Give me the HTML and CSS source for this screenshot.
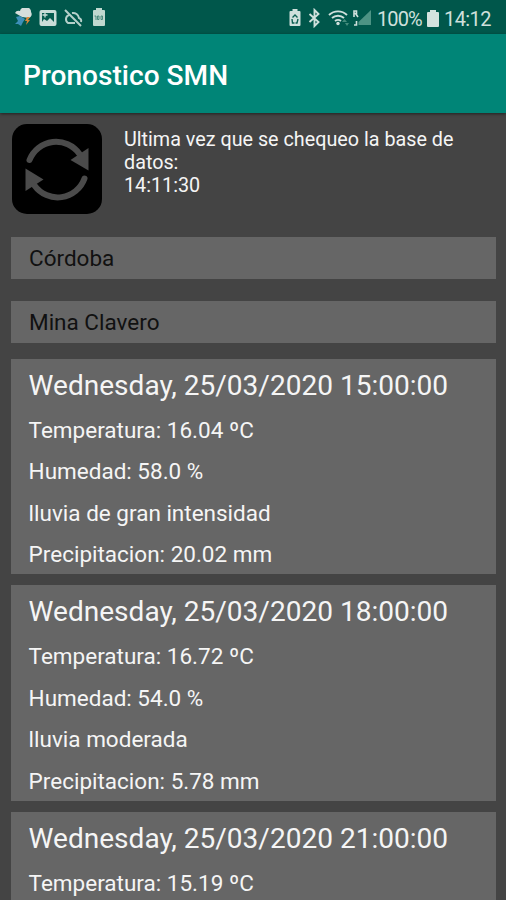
FILE: index.html
```
<!DOCTYPE html>
<html lang="es">
<head>
    <meta charset="UTF-8">
    <meta name="viewport" content="width=device-width, initial-scale=1.0">
    <title>Pronostico SMN</title>
    <link rel="stylesheet" href="styles.css">
</head>
<body>
    <div class="status-bar">
        <!-- Notifications -->
        <svg class="notifications" width="94" height="20" viewBox="0 0 94 20">
            <path d="M1 5a4 4 0 0 1 5-2 5 4 0 0 1 11 1 4 4 0 0 1-2 6l-7-1z" fill="#d5dedb"/>
            <path d="M2 9l4-1 5 3-2 3-2 4-3-2-3 0 3-3z" fill="#3d8fb8"/>
            <path d="M13 9h3l-2 3h2l-4 5 1-4h-2z" fill="#d8873b"/>
            <rect x="25.500" y="2" width="17" height="16" rx="2" fill="#c9ddd8"/>
            <path d="M28 5h12v9l-4-4-3 3-3-2-2 3z" fill="#065c4f"/>
            <path d="M31 4.500v5M28.500 7h5" stroke="#c9ddd8" stroke-width="1.300"/>
            <path d="M55 7a4.500 4.500 0 0 0-1 8h7M58 5a6 6 0 0 1 7 5 3 3 0 0 1 2 4M51 2l16 16" fill="none" stroke="#b5d0ca" stroke-width="2"/>
            <path d="M82 0h6v2h2a1 1 0 0 1 1 1v14a1 1 0 0 1-1 1H80a1 1 0 0 1-1-1V3a1 1 0 0 1 1-1h2z" fill="#bfd8cf"/>
            <path d="M80.500 8h1.500v4m1.500-4h1.500v3.500h-1.500zm3.500 0h1.500v3.500h-1.500z" fill="none" stroke="#31796b" stroke-width=".8"/>
        </svg>
        <!-- System icons -->
        <svg class="system" width="84" height="20" viewBox="0 0 84 20">
            <path d="M3.500 1h5v2h2a1 1 0 0 1 1 1v13a1 1 0 0 1-1 1h-9a1 1 0 0 1-1-1V4a1 1 0 0 1 1-1h2z" fill="#cfe0dc"/>
            <path d="M3.500 9.500L6 7l2.500 2.500M9 11l-1 4H6.500M3 11l.5 4h2" fill="none" stroke="#0b5e51" stroke-width="1.400"/>
            <path d="M20.500 6l9 8-4 4V2l4 4-9 8" fill="none" stroke="#cfe0dc" stroke-width="1.900"/>
            <g fill="none" stroke="#cfe0dc" stroke-width="1.900">
                <path d="M40 7a13 13 0 0 1 18 0M43 10a9 9 0 0 1 12 0M46 13a5 5 0 0 1 6 0"/>
            </g>
            <circle cx="49" cy="15.500" r="1.700" fill="#cfe0dc"/>
            <path d="M53 14l2.500-3 2.500 3zM56 15h4l-2 3z" fill="#458d7d"/>
            <path d="M65 9V3h2.500v2.500H65m1.500 0L69 9M67.500 13v4H65" fill="none" stroke="#cfe0dc" stroke-width="1.600"/>
            <path d="M82 2v15H69.500v-3z" fill="#4d9384"/>
        </svg>
        <span class="percent">100%</span>
        <svg class="battery" width="12" height="19" viewBox="0 0 12 19">
            <path d="M3 1h6v2h2a1 1 0 0 1 1 1v13a1 1 0 0 1-1 1H1a1 1 0 0 1-1-1V4a1 1 0 0 1 1-1h2z" fill="#d3e3df"/>
        </svg>
        <span class="clock">14:12</span>
    </div>

    <div class="toolbar">
        <h1>Pronostico SMN</h1>
    </div>

    <div class="update">
        <button class="refresh" aria-label="Actualizar">
            <svg width="90" height="90" viewBox="0 0 90 90">
                <rect width="90" height="90" rx="15" fill="#000"/>
                <g fill="none" stroke="#4b4b4b" stroke-width="6" stroke-linecap="round">
                    <path d="M17.500 36a28.500 28.500 0 0 1 50-6"/>
                    <path d="M72.500 54.500a28.500 28.500 0 0 1-50 7"/>
                </g>
                <path d="M76.500 24v22.500L58.500 36z" fill="#4b4b4b"/>
                <path d="M13.500 44.500V67L31.500 55.500z" fill="#4b4b4b"/>
            </svg>
        </button>
        <p>Ultima vez que se chequeo la base de<br>datos:<br>14:11:30</p>
    </div>

    <div class="spinner">Córdoba</div>
    <div class="spinner">Mina Clavero</div>

    <div class="forecast">
        <div class="card">
            <h2>Wednesday, 25/03/2020 15:00:00</h2>
            <p>Temperatura: 16.04 ºC</p>
            <p>Humedad: 58.0 %</p>
            <p>lluvia de gran intensidad</p>
            <p>Precipitacion: 20.02 mm</p>
        </div>
        <div class="card">
            <h2>Wednesday, 25/03/2020 18:00:00</h2>
            <p>Temperatura: 16.72 ºC</p>
            <p>Humedad: 54.0 %</p>
            <p>lluvia moderada</p>
            <p>Precipitacion: 5.78 mm</p>
        </div>
        <div class="card">
            <h2>Wednesday, 25/03/2020 21:00:00</h2>
            <p>Temperatura: 15.19 ºC</p>
        </div>
    </div>
</body>
</html>
```
FILE: styles.css
```
body {
    font-family: Roboto, "Liberation Sans", sans-serif;
    background-color: #444;
    color: #f5f5f5;
    margin: 0;
    height: 900px;
    overflow: hidden;
}

h1, h2, p {
    margin: 0;
}

.status-bar {
    display: flex;
    align-items: center;
    box-sizing: border-box;
    height: 34px;
    padding: 2px 15px 0 14px;
    background-color: #00574b;
    color: #cfe0dc;
    font-size: 20px;
    white-space: nowrap;
}

.system {
    margin-left: auto;
}

.percent {
    width: 45px;
    margin: 0 5px 0 4px;
    letter-spacing: -0.9px;
}

.clock {
    width: 47px;
    margin-left: 5px;
    letter-spacing: -0.6px;
}

.percent, .clock {
    padding-top: 1px;
}

.toolbar {
    display: flex;
    align-items: center;
    box-sizing: border-box;
    height: 79px;
    padding: 4px 23px 0;
    background-color: #008577;
    box-shadow: 0 1px 3px rgba(0, 0, 0, 0.5);
}

.toolbar h1 {
    font-size: 28.1px;
    font-weight: 500;
    line-height: 34px;
    color: #fff;
}

.update {
    display: flex;
    box-sizing: border-box;
    height: 124px;
    padding: 11px 12px 0;
    gap: 22px;
}

.refresh {
    width: 90px;
    height: 90px;
    padding: 0;
    border: 0;
    background: none;
}

.update p {
    padding-top: 4px;
    font-size: 19.75px;
    line-height: 23px;
}

.spinner {
    box-sizing: border-box;
    height: 42px;
    margin: 0 10px 22px 11px;
    padding-left: 18px;
    background-color: #666;
    color: #111;
    font-size: 22.5px;
    line-height: 43px;
}

.forecast {
    display: flex;
    flex-direction: column;
    gap: 11px;
    height: 541px;
    overflow: hidden;
    margin: -6px 10px 0 11px;
}

.card {
    box-sizing: border-box;
    height: 215.3px;
    flex-shrink: 0;
    padding: 10px 0 0 17.6px;
    background-color: #666;
}

.card h2 {
    font-size: 28.05px;
    font-weight: 400;
    line-height: 34px;
    margin-bottom: 7px;
}

.card p {
    font-size: 22.5px;
    line-height: 41.4px;
}
```
